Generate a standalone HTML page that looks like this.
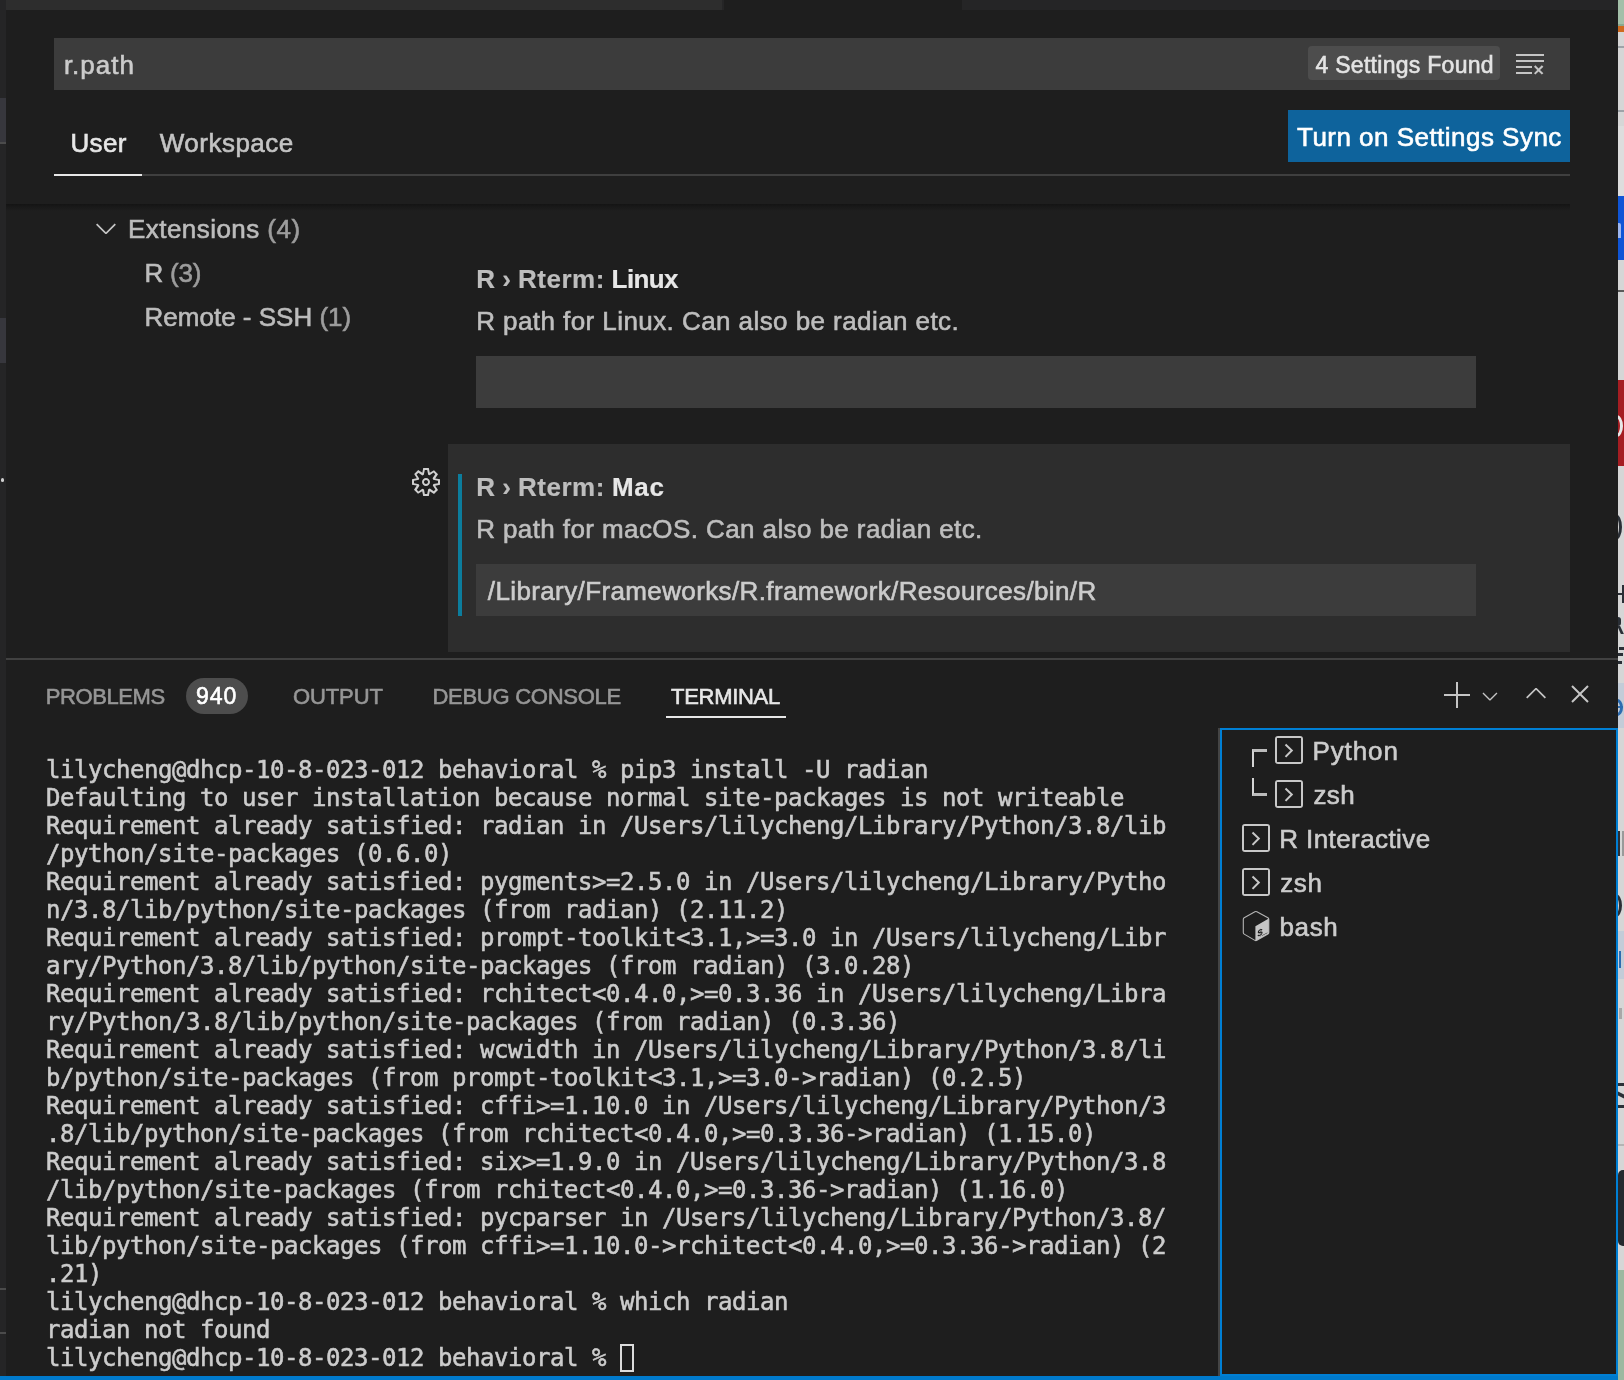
<!DOCTYPE html>
<html lang="en">
<head>
<meta charset="utf-8">
<title>Settings</title>
<style>
*{box-sizing:border-box;margin:0;padding:0}
html,body{width:1624px;height:1380px;overflow:hidden;background:#1e1e1e}
body{position:relative;font-family:"Liberation Sans","DejaVu Sans",sans-serif;color:#cccccc}
.abs{position:absolute}
.t{position:absolute;white-space:nowrap;line-height:1;-webkit-text-stroke:0.6px currentColor}
svg{position:absolute;overflow:visible}
/* left + top chrome */
#leftstrip{left:0;top:0;width:6px;height:1376px;background:#252526}
.lsel{left:0;width:6px;background:#37373d}
#tabbarL{left:6px;top:0;width:716px;height:10px;background:#2d2d2d}
#tabbarR{left:962px;top:0;width:656px;height:10px;background:#252526}
/* search */
#search{left:54px;top:38px;width:1516px;height:52px;background:#3c3c3c}
#found{left:1308px;top:46px;width:192px;height:34px;background:#4d4d4d;border-radius:4px}
#syncbtn{left:1288px;top:110px;width:282px;height:52px;background:#0e639c}
#tabline{left:54px;top:174px;width:1516px;height:2px;background:#3f3f3f}
#userline{left:54px;top:174px;width:88px;height:2px;background:#e7e7e7}
#shadow{left:6px;top:204px;width:1564px;height:7px;background:linear-gradient(#141414,#191919 45%,#1e1e1e)}
/* settings */
.inp{left:476px;width:1000px;height:52px;background:#3c3c3c}
#focusbg{left:448px;top:444px;width:1122px;height:208px;background:#2d2d2d}
#focusbar{left:458px;top:474px;width:4px;height:142px;background:#0c7d9d}
/* panel */
#panelborder{left:6px;top:658px;width:1612px;height:2px;background:#414141}
#badge{left:186px;top:678px;width:62px;height:36px;border-radius:18px;background:#4d4d4d}
#termline{left:666px;top:716px;width:120px;height:2px;background:#e7e7e7}
#tablist{left:1220px;top:728px;width:398px;height:648px;border:2px solid #007fd4}
#sash{left:1218px;top:728px;width:2px;height:648px;background:#444444}
#status{left:0;top:1376px;width:1618px;height:4px;background:#007acc}
#term{left:46px;top:756px;-webkit-text-stroke:0.55px currentColor;font-family:"DejaVu Sans Mono","Liberation Mono",monospace;font-size:24px;line-height:28px;letter-spacing:-0.45px;color:#cccccc;white-space:pre}
#cursor{left:620px;top:1344px;width:14px;height:28px;border:2px solid #dcdcdc}
/* right window strip */
#rstrip{left:1618px;top:0;width:6px;height:1380px;background:#d6d6d6;overflow:hidden}
#rstrip div{position:absolute;left:0;width:6px}
</style>
</head>
<body>
<div id="root" style="position:absolute;left:0;top:0;width:1624px;height:1380px;will-change:transform">
<!-- chrome -->
<div class="abs" id="leftstrip"></div>
<div class="abs lsel" style="top:98px;height:46px"></div>
<div class="abs lsel" style="top:318px;height:45px"></div>
<div class="abs" style="left:0;top:142px;width:6px;height:2px;background:#4b4b4b"></div>
<div class="abs" style="left:1px;top:478px;width:3px;height:4px;border-radius:2px;background:#d0d0d0"></div>
<div class="abs" style="left:0;top:1288px;width:6px;height:2px;background:#4b4b4b"></div>
<div class="abs" style="left:0;top:1332px;width:6px;height:2px;background:#4b4b4b"></div>
<div class="abs" id="tabbarL"></div>
<div class="abs" id="tabbarR"></div>
<div class="abs" style="left:722px;top:0;width:2px;height:10px;background:#252526"></div>

<!-- search header -->
<div class="abs" id="search"></div>
<div class="t" style="left:63.9px;top:52px;font-size:26px;letter-spacing:1px;color:#cccccc">r.path</div>
<div class="abs" id="found"></div>
<div class="t" style="left:1315.5px;top:54px;font-size:23px;letter-spacing:0.28px;color:#e4e4e4">4 Settings Found</div>
<div class="t" style="left:70.4px;top:130px;font-size:26px;letter-spacing:0.37px;color:#e7e7e7">User</div>
<div class="t" style="left:159.7px;top:130px;font-size:26px;letter-spacing:0.5px;color:#c4c4c4">Workspace</div>
<div class="abs" id="syncbtn"></div>
<div class="t" style="left:1297px;top:124px;font-size:26px;letter-spacing:0.475px;color:#ffffff">Turn on Settings Sync</div>
<div class="abs" id="tabline"></div>
<div class="abs" id="userline"></div>
<div class="abs" id="shadow"></div>

<!-- toc -->
<div class="t" style="left:128px;top:216px;font-size:26px;letter-spacing:0.45px;color:#bcbcbc">Extensions <span style="color:#9d9d9d">(4)</span></div>
<div class="t" style="left:144.6px;top:260px;font-size:26px;letter-spacing:-0.27px;color:#bcbcbc">R <span style="color:#9d9d9d">(3)</span></div>
<div class="t" style="left:144.6px;top:304px;font-size:26px;color:#bcbcbc">Remote - SSH <span style="color:#9d9d9d">(1)</span></div>

<!-- settings -->
<div class="t" style="left:476.2px;top:266px;font-size:26px;font-weight:bold;-webkit-text-stroke:0.2px currentColor;color:#bdbdbd">R › <span style="letter-spacing:0.5px">Rterm:</span> <span style="color:#e7e7e7;letter-spacing:-0.6px;margin-left:-0.5px">Linux</span></div>
<div class="t" style="left:476.2px;top:308px;font-size:26px;letter-spacing:0.43px;color:#bebebe">R path for Linux. Can also be radian etc.</div>
<div class="abs inp" style="top:356px"></div>
<div class="abs" id="focusbg"></div>
<div class="abs" id="focusbar"></div>
<div class="t" style="left:476.2px;top:474px;font-size:26px;font-weight:bold;-webkit-text-stroke:0.2px currentColor;color:#bdbdbd">R › <span style="letter-spacing:0.5px">Rterm:</span> <span style="color:#e7e7e7;letter-spacing:0.6px">Mac</span></div>
<div class="t" style="left:476.2px;top:516px;font-size:26px;letter-spacing:0.405px;color:#bebebe">R path for macOS. Can also be radian etc.</div>
<div class="abs inp" style="top:564px"></div>
<div class="t" style="left:487.8px;top:578px;font-size:26px;letter-spacing:0.38px;color:#cccccc">/Library/Frameworks/R.framework/Resources/bin/R</div>

<!-- panel -->
<div class="abs" id="panelborder"></div>
<div class="t" style="left:45.7px;top:686px;font-size:22px;letter-spacing:-0.39px;color:#969696">PROBLEMS</div>
<div class="abs" id="badge"></div>
<div class="t" style="left:196px;top:685px;font-size:23px;letter-spacing:0.9px;color:#ffffff">940</div>
<div class="t" style="left:293px;top:686px;font-size:22px;letter-spacing:-0.12px;color:#969696">OUTPUT</div>
<div class="t" style="left:432.4px;top:686px;font-size:22px;letter-spacing:-0.26px;color:#969696">DEBUG CONSOLE</div>
<div class="t" style="left:671px;top:686px;font-size:22px;letter-spacing:-0.29px;color:#e7e7e7">TERMINAL</div>
<div class="abs" id="termline"></div>

<div class="abs" id="sash"></div>
<div class="abs" id="tablist"></div>
<div class="t" style="left:1312.4px;top:738px;font-size:26px;letter-spacing:0.9px;color:#cccccc">Python</div>
<div class="t" style="left:1313.4px;top:782px;font-size:26px;letter-spacing:0.45px;color:#cccccc">zsh</div>
<div class="t" style="left:1279.2px;top:826px;font-size:26px;letter-spacing:0.42px;color:#cccccc">R Interactive</div>
<div class="t" style="left:1280.2px;top:870px;font-size:26px;letter-spacing:0.65px;color:#cccccc">zsh</div>
<div class="t" style="left:1279.6px;top:914px;font-size:26px;letter-spacing:0.57px;color:#cccccc">bash</div>

<div class="abs" id="term">lilycheng@dhcp-10-8-023-012 behavioral % pip3 install -U radian
Defaulting to user installation because normal site-packages is not writeable
Requirement already satisfied: radian in /Users/lilycheng/Library/Python/3.8/lib
/python/site-packages (0.6.0)
Requirement already satisfied: pygments&gt;=2.5.0 in /Users/lilycheng/Library/Pytho
n/3.8/lib/python/site-packages (from radian) (2.11.2)
Requirement already satisfied: prompt-toolkit&lt;3.1,&gt;=3.0 in /Users/lilycheng/Libr
ary/Python/3.8/lib/python/site-packages (from radian) (3.0.28)
Requirement already satisfied: rchitect&lt;0.4.0,&gt;=0.3.36 in /Users/lilycheng/Libra
ry/Python/3.8/lib/python/site-packages (from radian) (0.3.36)
Requirement already satisfied: wcwidth in /Users/lilycheng/Library/Python/3.8/li
b/python/site-packages (from prompt-toolkit&lt;3.1,&gt;=3.0-&gt;radian) (0.2.5)
Requirement already satisfied: cffi&gt;=1.10.0 in /Users/lilycheng/Library/Python/3
.8/lib/python/site-packages (from rchitect&lt;0.4.0,&gt;=0.3.36-&gt;radian) (1.15.0)
Requirement already satisfied: six&gt;=1.9.0 in /Users/lilycheng/Library/Python/3.8
/lib/python/site-packages (from rchitect&lt;0.4.0,&gt;=0.3.36-&gt;radian) (1.16.0)
Requirement already satisfied: pycparser in /Users/lilycheng/Library/Python/3.8/
lib/python/site-packages (from cffi&gt;=1.10.0-&gt;rchitect&lt;0.4.0,&gt;=0.3.36-&gt;radian) (2
.21)
lilycheng@dhcp-10-8-023-012 behavioral % which radian
radian not found
lilycheng@dhcp-10-8-023-012 behavioral % </div>
<div class="abs" id="cursor"></div>


<!-- icons -->
<svg style="left:1514px;top:48px" width="32" height="32" viewBox="0 0 16 16" fill="#c5c5c5"><path d="M10 12.6l.7.7 1.6-1.6 1.6 1.6.8-.7L13 11l1.7-1.6-.8-.8-1.6 1.7-1.6-1.7-.7.8 1.6 1.6-1.6 1.6zM1 4h14V3H1v1zm0 3h14V6H1v1zm8 2.5V9H1v1h8v-.5zM9 13v-1H1v1h8z"/></svg>
<svg style="left:90px;top:212px" width="32" height="32" viewBox="0 0 16 16" fill="#c5c5c5"><path d="M7.976 10.072l4.357-4.357.62.618L8.284 11h-.618L3 6.333l.619-.618 4.357 4.357z"/></svg>
<svg style="left:410px;top:466px" width="32" height="32" viewBox="0 0 16 16" fill="#d0d0d0"><path fill-rule="evenodd" clip-rule="evenodd" d="M9.1 4.4L8.6 2H7.4l-.5 2.4-.7.3-2-1.3-.9.8 1.3 2-.2.7-2.4.5v1.2l2.4.5.3.8-1.3 2 .8.8 2-1.3.8.3.4 2.3h1.2l.5-2.4.8-.3 2 1.3.8-.8-1.3-2 .3-.8 2.3-.4V7.4l-2.4-.5-.3-.8 1.3-2-.8-.8-2 1.3-.7-.2zM9.4 1l.5 2.4L12 2.1l2 2-1.4 2.1 2.4.4v2.800l-2.400.5L14 12l-2 2-2.100-1.400-.5 2.400H6.600l-.5-2.400L4 13.900l-2-2 1.400-2.100L1 9.400V6.600l2.400-.5L2.100 4l2-2 2.100 1.400.4-2.400h2.800zm.6 7c0 1.100-.9 2-2 2s-2-.9-2-2 .9-2 2-2 2 .9 2 2zM8 9c.6 0 1-.4 1-1s-.4-1-1-1-1 .4-1 1 .4 1 1 1z"/></svg>
<svg style="left:1442px;top:680px" width="32" height="32" viewBox="0 0 16 16" fill="#c5c5c5"><path d="M14 7v1H8v6H7V8H1V7h6V1h1v6h6z"/></svg>
<svg style="left:1478px;top:684px" width="24" height="24" viewBox="0 0 16 16" fill="#c5c5c5"><path d="M7.976 10.072l4.357-4.357.62.618L8.284 11h-.618L3 6.333l.619-.618 4.357 4.357z"/></svg>
<svg style="left:1520px;top:678px" width="32" height="32" viewBox="0 0 16 16" fill="#c5c5c5"><path d="M8.024 5.928l-4.357 4.357-.62-.618L7.716 5h.618L13 9.667l-.619.618-4.357-4.357z"/></svg>
<svg style="left:1564px;top:678px" width="32" height="32" viewBox="0 0 16 16" fill="#c5c5c5"><path d="M8 8.707l3.646 3.647.708-.707L8.707 8l3.647-3.646-.707-.708L8 7.293 4.354 3.646l-.707.708L7.293 8l-3.646 3.646.707.708L8 8.707z"/></svg>
<svg class="tic" style="left:1273px;top:734px" width="32" height="32" viewBox="0 0 32 32"><path fill="#c8c8c8" fill-rule="evenodd" d="M5 2h22a3 3 0 0 1 3 3v22a3 3 0 0 1-3 3H5a3 3 0 0 1-3-3V5a3 3 0 0 1 3-3zM4 4v24h24V4z"/><polyline points="12.5,10.5 18.8,16.5 12.5,22.9" fill="none" stroke="#c8c8c8" stroke-width="2"/></svg>
<svg class="tic" style="left:1273px;top:778px" width="32" height="32" viewBox="0 0 32 32"><path fill="#c8c8c8" fill-rule="evenodd" d="M5 2h22a3 3 0 0 1 3 3v22a3 3 0 0 1-3 3H5a3 3 0 0 1-3-3V5a3 3 0 0 1 3-3zM4 4v24h24V4z"/><polyline points="12.5,10.5 18.8,16.5 12.5,22.9" fill="none" stroke="#c8c8c8" stroke-width="2"/></svg>
<svg class="tic" style="left:1240px;top:822px" width="32" height="32" viewBox="0 0 32 32"><path fill="#c8c8c8" fill-rule="evenodd" d="M5 2h22a3 3 0 0 1 3 3v22a3 3 0 0 1-3 3H5a3 3 0 0 1-3-3V5a3 3 0 0 1 3-3zM4 4v24h24V4z"/><polyline points="12.5,10.5 18.8,16.5 12.5,22.9" fill="none" stroke="#c8c8c8" stroke-width="2"/></svg>
<svg class="tic" style="left:1240px;top:866px" width="32" height="32" viewBox="0 0 32 32"><path fill="#c8c8c8" fill-rule="evenodd" d="M5 2h22a3 3 0 0 1 3 3v22a3 3 0 0 1-3 3H5a3 3 0 0 1-3-3V5a3 3 0 0 1 3-3zM4 4v24h24V4z"/><polyline points="12.5,10.5 18.8,16.5 12.5,22.9" fill="none" stroke="#c8c8c8" stroke-width="2"/></svg>
<svg style="left:1240px;top:908px" width="32" height="36" viewBox="0 0 32 36"><path d="M14.9 3.75Q15.9 3.2 16.9 3.75L27.9 9.8Q28.8 10.3 28.8 11.4V24.5Q28.8 25.6 27.9 26.1L16.9 32.35Q15.9 32.9 14.9 32.35L4.2 26.1Q3.3 25.6 3.3 24.5V11.4Q3.3 10.3 4.2 9.8Z" fill="none" stroke="#b4b4b4" stroke-width="1.1"/><path d="M15.4 18.3L28.8 10.5V24.5Q28.8 25.6 27.9 26.1L16.9 32.35Q16.2 32.8 15.4 32.7Z" fill="#c5c5c5"/><text font-family="Liberation Mono,monospace" font-size="9.5" font-weight="bold" fill="#1e1e1e" transform="translate(17.3 29.3) skewY(-28)" letter-spacing="-1.2">$_</text></svg>
<div class="abs" style="left:1252px;top:749px;width:15px;height:18px;border-top:3px solid #bcbcbc;border-left:2px solid #d4d4d4"></div>
<div class="abs" style="left:1252px;top:778px;width:15px;height:18px;border-bottom:3px solid #bcbcbc;border-left:2px solid #d4d4d4"></div>

<div class="abs" id="status"></div>

<!-- neighbouring window strip -->
<div class="abs" id="rstrip">
<div style="top:0;height:24px;background:#a3bfa8"></div>
<div style="top:24px;height:2px;background:#8aa890"></div>
<div style="top:26px;height:6px;background:#cf6a1f"></div>
<div style="top:46px;height:2px;background:#9ea3a8"></div>
<div style="top:110px;height:2px;background:#9ea3a8"></div>
<div style="top:126px;height:70px;background:#dddddd"></div>
<div style="top:196px;height:64px;background:#0f55d6"></div>
<div style="top:223px;height:15px;width:3px;background:#9db6ef;border-radius:0 2px 0 0"></div>
<div style="top:290px;height:2px;background:#5a5a5a"></div>
<div style="top:380px;height:86px;background:#a51d22"></div>
<div style="top:415px;left:-8px;width:13px;height:22px;border:3px solid #e8e8e8;border-radius:50%"></div>
<div style="top:514px;left:-9px;width:13px;height:26px;border:3px solid #2a2f36;border-radius:50%"></div>
<div style="top:585px;left:4px;width:2px;height:18px;background:#2a2f36"></div>
<div style="top:593px;left:0;width:4px;height:2px;background:#2a2f36"></div>
<div style="top:617px;left:0;width:3px;height:9px;background:#2a2f36;border-radius:0 3px 3px 0"></div>
<div style="top:626px;left:1px;width:3px;height:8px;background:#2a2f36;transform:skewX(25deg)"></div>
<div style="top:647px;left:1px;width:5px;height:3px;background:#2a2f36"></div>
<div style="top:653px;left:0;width:5px;height:3px;background:#2a2f36"></div>
<div style="top:661px;left:0;width:4px;height:3px;background:#2a2f36"></div>
<div style="top:683px;height:45px;background:#c3ccd8"></div>
<div style="top:699px;left:-7px;width:12px;height:17px;border:3px solid #2c6cb0;border-radius:50%"></div>
<div style="top:706px;left:0;width:5px;height:2px;background:#2c6cb0"></div>
<div style="top:831px;left:0;width:2px;height:25px;background:#2a2f36"></div>
<div style="top:831px;left:4px;width:2px;height:25px;background:#9a9a9a"></div>
<div style="top:894px;left:-9px;width:13px;height:23px;border:3px solid #2a2f36;border-radius:50%"></div>
<div style="top:931px;height:48px;background:#c3ccd8"></div>
<div style="top:951px;left:1px;width:2px;height:17px;background:#2c6cb0"></div>
<div style="top:1008px;left:1px;width:3px;height:11px;background:#a8a8a8"></div>
<div style="top:1083px;left:0;width:6px;height:3px;background:#2a2f36"></div>
<div style="top:1093px;left:0;width:6px;height:4px;background:#2a2f36;transform:skewY(25deg)"></div>
<div style="top:1105px;left:0;width:6px;height:3px;background:#2a2f36"></div>
<div style="top:1144px;height:2px;background:#b4b4b4"></div>
<div style="top:1170px;height:76px;background:#24292e;border-radius:5px 0 0 5px"></div>
<div style="top:1270px;height:110px;background:#9cb8a0"></div>
</div>
</div>
</body>
</html>
